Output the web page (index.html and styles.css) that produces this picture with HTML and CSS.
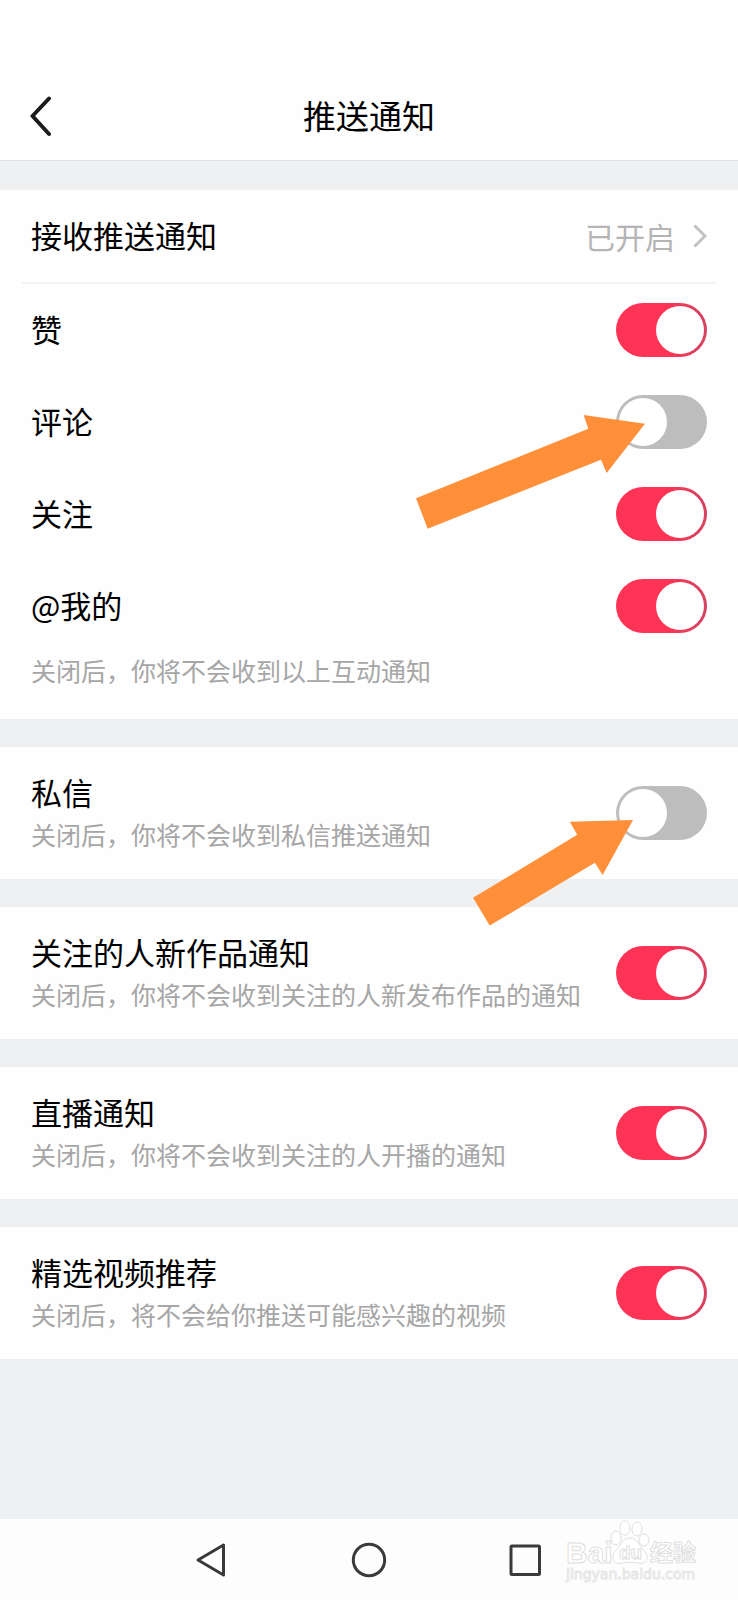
FILE: index.html
```html
<!DOCTYPE html>
<html lang="zh-CN">
<head>
<meta charset="utf-8">
<meta name="viewport" content="width=device-width, initial-scale=1">
<title>推送通知</title>
<link rel="stylesheet" href="styles.css">
</head>
<body>
<header class="header">
  <button class="back" type="button" aria-label="返回">
    <svg width="24" height="44" viewBox="0 0 24 44" fill="none" stroke="#1c1c1e" stroke-width="4" stroke-linecap="round" stroke-linejoin="round"><path d="M19 4.500 2.500 22 19 40"/></svg>
  </button>
  <h1 class="title">推送通知</h1>
</header>

<main class="settings">
  <section class="card">
    <a class="row row-link" href="#system">
      <span class="label">接收推送通知</span>
      <span class="value">已开启
        <svg width="14" height="24" viewBox="0 0 14 24" fill="none" stroke="#c2c2c2" stroke-width="3"><path d="M1.500 1.500 12 12 1.500 22.500"/></svg>
      </span>
    </a>
    <div class="row">
      <label class="label" for="like">赞</label>
      <input class="switch" type="checkbox" role="switch" id="like" checked>
    </div>
    <div class="row">
      <label class="label" for="comment">评论</label>
      <input class="switch" type="checkbox" role="switch" id="comment">
      <svg class="arrow arrow-comment" viewBox="48 377 687 341" aria-hidden="true"><path d="M48 627 565 418 551 377 735 403 620 551 603 511 83 718Z"/></svg>
    </div>
    <div class="row">
      <label class="label" for="follow">关注</label>
      <input class="switch" type="checkbox" role="switch" id="follow" checked>
    </div>
    <div class="row">
      <label class="label" for="mention">@我的</label>
      <input class="switch" type="checkbox" role="switch" id="mention" checked>
    </div>
    <p class="note">关闭后，你将不会收到以上互动通知</p>
  </section>

  <section class="card option">
    <div class="text">
      <label class="label" for="message">私信</label>
      <p class="desc">关闭后，你将不会收到私信推送通知</p>
    </div>
    <input class="switch" type="checkbox" role="switch" id="message">
    <svg class="arrow arrow-message" viewBox="100 359 479 316" aria-hidden="true"><path d="M100 592 412 403 390 364 579 359 488 524 465 487 150 675Z"/></svg>
  </section>

  <section class="card option">
    <div class="text">
      <label class="label" for="works">关注的人新作品通知</label>
      <p class="desc">关闭后，你将不会收到关注的人新发布作品的通知</p>
    </div>
    <input class="switch" type="checkbox" role="switch" id="works" checked>
  </section>

  <section class="card option">
    <div class="text">
      <label class="label" for="live">直播通知</label>
      <p class="desc">关闭后，你将不会收到关注的人开播的通知</p>
    </div>
    <input class="switch" type="checkbox" role="switch" id="live" checked>
  </section>

  <section class="card option">
    <div class="text">
      <label class="label" for="video">精选视频推荐</label>
      <p class="desc">关闭后，将不会给你推送可能感兴趣的视频</p>
    </div>
    <input class="switch" type="checkbox" role="switch" id="video" checked>
  </section>
</main>

<nav class="navbar" aria-label="系统导航">
  <button class="nav-btn" type="button" aria-label="后退">
    <svg width="36" height="36" viewBox="0 0 36 36"><path d="M3 18 28.500 3 28.500 33Z"/></svg>
  </button>
  <button class="nav-btn" type="button" aria-label="主页">
    <svg width="36" height="36" viewBox="0 0 36 36"><circle cx="18" cy="18" r="15.700"/></svg>
  </button>
  <button class="nav-btn" type="button" aria-label="最近任务">
    <svg width="36" height="36" viewBox="0 0 36 36"><rect x="4" y="4" width="28.500" height="28.500" rx="1"/></svg>
  </button>
  <svg class="watermark" width="136" height="66" viewBox="0 0 136 66">
    <text class="wm-big" x="1" y="43">Bai</text>
    <g class="wm-paw">
      <ellipse cx="51" cy="18" rx="5" ry="7"/>
      <ellipse cx="60" cy="8" rx="5" ry="7"/>
      <ellipse cx="72" cy="9" rx="5" ry="7"/>
      <ellipse cx="79" cy="20" rx="5" ry="6"/>
      <path d="M65 18c-6 0-8 5-11 9-4 4-7 7-6 12 1 4 5 5 9 4 5-1 11-1 16 0 4 1 8 0 9-4 1-5-3-8-6-12-3-4-5-9-11-9Z"/>
    </g>
    <text class="wm-du" x="54" y="39">du</text>
    <text class="wm-cn" x="85" y="41">经验</text>
    <text class="wm-url" x="1" y="59">jingyan.baidu.com</text>
  </svg>
</nav>
</body>
</html>
```
FILE: styles.css
```css
* {
  box-sizing: border-box;
}

body {
  margin: 0;
  min-height: 100vh;
  display: flex;
  flex-direction: column;
  background: #eff0f2;
  color: #000;
  font-family: "Noto Sans CJK SC", sans-serif;
}

button {
  padding: 0;
  border: 0;
  background: none;
}

svg {
  display: block;
}

.header {
  display: grid;
  grid-template-columns: 44px 1fr 44px;
  align-items: center;
  padding: 72px 30px 0;
  height: 161px;
  background: #fefefe;
  border-bottom: 1px solid #e1e1e3;
}

.title {
  margin: 0;
  padding-bottom: 2px;
  font-size: 33px;
  line-height: 44px;
  font-weight: 400;
  text-align: center;
}

.settings {
  flex: 1;
  display: flex;
  flex-direction: column;
  gap: 28px;
  padding: 29px 0 40px;
}

.card {
  position: relative;
  background: #fefefe;
}

.row {
  position: relative;
  display: flex;
  align-items: center;
  justify-content: space-between;
  height: 92px;
  padding: 0 31px;
}

.row-link {
  height: 94px;
  margin: 0 22px;
  padding: 0 9px;
  border-bottom: 2px solid #f3f3f4;
  color: inherit;
  text-decoration: none;
}

.label {
  display: block;
  font-size: 31px;
  line-height: 44px;
}

.row .label {
  padding-bottom: 2px;
}

.value {
  display: flex;
  align-items: center;
  gap: 18px;
  font-size: 30px;
  line-height: 44px;
  color: #b4b4b4;
}

.note,
.desc {
  margin: 0;
  font-size: 25px;
  line-height: 40px;
  color: #a6a6a6;
}

.note {
  padding: 0 31px 31px;
  line-height: 36px;
}

.option {
  display: flex;
  align-items: center;
  justify-content: space-between;
  padding: 23px 31px;
}

.text {
  padding-bottom: 2px;
}

.switch {
  appearance: none;
  flex: none;
  width: 91px;
  height: 54px;
  margin: 0;
  padding: 3px;
  border-radius: 27px;
  background: #bdbdbd;
}

.switch::before {
  content: "";
  display: block;
  width: 48px;
  height: 48px;
  border-radius: 50%;
  background: #fff;
}

.switch:checked {
  background: linear-gradient(to right, #fe3355 60%, #d8415f 90%);
}

.switch:checked::before {
  margin-left: auto;
}

.arrow {
  position: absolute;
  z-index: 1;
  fill: #ff8f39;
}

.arrow-comment {
  top: 39px;
  right: 93px;
  width: 229px;
}

.arrow-message {
  top: 73px;
  right: 105px;
  width: 160px;
}

.navbar {
  position: relative;
  display: flex;
  align-items: center;
  justify-content: center;
  gap: 120px;
  height: 81px;
  background: #fdfdfd;
}

.nav-btn svg {
  fill: none;
  stroke: #3a3a3a;
  stroke-width: 3;
  stroke-linejoin: round;
}

.watermark {
  position: absolute;
  right: 37px;
  bottom: 14px;
  fill: #fff;
  stroke: #dfdfdf;
  stroke-width: 1;
  overflow: visible;
}

.wm-big {
  font: bold 30px "Liberation Sans", sans-serif;
}

.wm-du {
  font: bold 19px "Liberation Sans", sans-serif;
}

.wm-cn {
  font: bold 23px "Noto Sans CJK SC", sans-serif;
}

.wm-url {
  font: 14px "DejaVu Sans", sans-serif;
  stroke: #e6e6e6;
}
```
